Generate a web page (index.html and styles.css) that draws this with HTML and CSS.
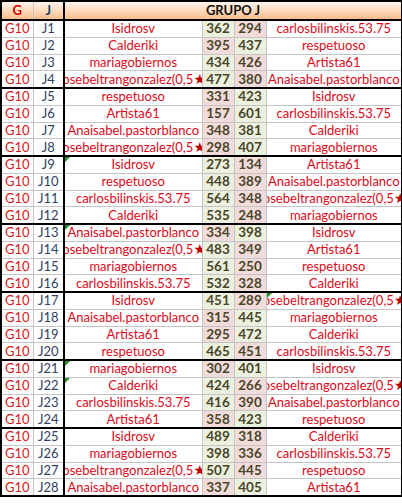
FILE: index.html
```html
<!DOCTYPE html>
<html>
<head>
<meta charset="utf-8">
<link rel="stylesheet" href="styles.css">
</head>
<body>
<table class="sheet">
<colgroup>
<col class="c-g"><col class="c-j"><col class="c-name"><col class="c-num"><col class="c-num"><col class="c-name2">
</colgroup>
<thead>
<tr class="head"><th class="h-g">G</th><th class="h-j">J</th><th colspan="4" class="h-grp">GRUPO J</th></tr>
</thead>
<tbody>
<tr><td class="g">G10</td><td class="j">J1</td><td class="name"><div class="fit">Isidrosv</div></td><td class="num win">362</td><td class="num lose">294</td><td class="name"><div class="fit">carlosbilinskis.53.75</div></td></tr>
<tr><td class="g">G10</td><td class="j">J2</td><td class="name"><div class="fit">Calderiki</div></td><td class="num lose">395</td><td class="num win">437</td><td class="name"><div class="fit">respetuoso</div></td></tr>
<tr><td class="g">G10</td><td class="j">J3</td><td class="name"><div class="fit">mariagobiernos</div></td><td class="num win">434</td><td class="num lose">426</td><td class="name"><div class="fit">Artista61</div></td></tr>
<tr class="end"><td class="g">G10</td><td class="j">J4</td><td class="name"><div class="fit"><span>Josebeltrangonzalez(0,5<span class="star">★</span>)</span></div></td><td class="num win">477</td><td class="num lose">380</td><td class="name"><div class="fit">Anaisabel.pastorblanco</div></td></tr>
<tr><td class="g">G10</td><td class="j">J5</td><td class="name"><div class="fit">respetuoso</div></td><td class="num lose">331</td><td class="num win">423</td><td class="name"><div class="fit">Isidrosv</div></td></tr>
<tr><td class="g">G10</td><td class="j">J6</td><td class="name"><div class="fit">Artista61</div></td><td class="num lose">157</td><td class="num win">601</td><td class="name"><div class="fit">carlosbilinskis.53.75</div></td></tr>
<tr><td class="g">G10</td><td class="j">J7</td><td class="name"><div class="fit">Anaisabel.pastorblanco</div></td><td class="num lose">348</td><td class="num win">381</td><td class="name"><div class="fit">Calderiki</div></td></tr>
<tr class="end"><td class="g">G10</td><td class="j">J8</td><td class="name"><div class="fit"><span>Josebeltrangonzalez(0,5<span class="star">★</span>)</span></div></td><td class="num lose">298</td><td class="num win">407</td><td class="name"><div class="fit">mariagobiernos</div></td></tr>
<tr><td class="g">G10</td><td class="j">J9</td><td class="name flag"><div class="fit">Isidrosv</div></td><td class="num win">273</td><td class="num lose">134</td><td class="name"><div class="fit">Artista61</div></td></tr>
<tr><td class="g">G10</td><td class="j">J10</td><td class="name"><div class="fit">respetuoso</div></td><td class="num win">448</td><td class="num lose">389</td><td class="name"><div class="fit">Anaisabel.pastorblanco</div></td></tr>
<tr><td class="g">G10</td><td class="j">J11</td><td class="name"><div class="fit">carlosbilinskis.53.75</div></td><td class="num win">564</td><td class="num lose">348</td><td class="name"><div class="fit"><span>Josebeltrangonzalez(0,5<span class="star">★</span>)</span></div></td></tr>
<tr class="end"><td class="g">G10</td><td class="j">J12</td><td class="name"><div class="fit">Calderiki</div></td><td class="num win">535</td><td class="num lose">248</td><td class="name"><div class="fit">mariagobiernos</div></td></tr>
<tr><td class="g">G10</td><td class="j">J13</td><td class="name flag"><div class="fit">Anaisabel.pastorblanco</div></td><td class="num lose">334</td><td class="num win">398</td><td class="name"><div class="fit">Isidrosv</div></td></tr>
<tr><td class="g">G10</td><td class="j">J14</td><td class="name"><div class="fit"><span>Josebeltrangonzalez(0,5<span class="star">★</span>)</span></div></td><td class="num win">483</td><td class="num lose">349</td><td class="name"><div class="fit">Artista61</div></td></tr>
<tr><td class="g">G10</td><td class="j">J15</td><td class="name"><div class="fit">mariagobiernos</div></td><td class="num win">561</td><td class="num lose">250</td><td class="name"><div class="fit">respetuoso</div></td></tr>
<tr class="end"><td class="g">G10</td><td class="j">J16</td><td class="name"><div class="fit">carlosbilinskis.53.75</div></td><td class="num win">532</td><td class="num lose">328</td><td class="name"><div class="fit">Calderiki</div></td></tr>
<tr><td class="g">G10</td><td class="j">J17</td><td class="name"><div class="fit">Isidrosv</div></td><td class="num win">451</td><td class="num lose">289</td><td class="name flag"><div class="fit"><span>Josebeltrangonzalez(0,5<span class="star">★</span>)</span></div></td></tr>
<tr><td class="g">G10</td><td class="j">J18</td><td class="name"><div class="fit">Anaisabel.pastorblanco</div></td><td class="num lose">315</td><td class="num win">445</td><td class="name"><div class="fit">mariagobiernos</div></td></tr>
<tr><td class="g">G10</td><td class="j">J19</td><td class="name"><div class="fit">Artista61</div></td><td class="num lose">295</td><td class="num win">472</td><td class="name"><div class="fit">Calderiki</div></td></tr>
<tr class="end"><td class="g">G10</td><td class="j">J20</td><td class="name"><div class="fit">respetuoso</div></td><td class="num win">465</td><td class="num lose">451</td><td class="name"><div class="fit">carlosbilinskis.53.75</div></td></tr>
<tr><td class="g">G10</td><td class="j">J21</td><td class="name flag"><div class="fit">mariagobiernos</div></td><td class="num lose">302</td><td class="num win">401</td><td class="name"><div class="fit">Isidrosv</div></td></tr>
<tr><td class="g">G10</td><td class="j">J22</td><td class="name flag"><div class="fit">Calderiki</div></td><td class="num win">424</td><td class="num lose">266</td><td class="name"><div class="fit"><span>Josebeltrangonzalez(0,5<span class="star">★</span>)</span></div></td></tr>
<tr><td class="g">G10</td><td class="j">J23</td><td class="name"><div class="fit">carlosbilinskis.53.75</div></td><td class="num win">416</td><td class="num lose">390</td><td class="name"><div class="fit">Anaisabel.pastorblanco</div></td></tr>
<tr class="end"><td class="g">G10</td><td class="j">J24</td><td class="name"><div class="fit">Artista61</div></td><td class="num lose">358</td><td class="num win">423</td><td class="name"><div class="fit">respetuoso</div></td></tr>
<tr><td class="g">G10</td><td class="j">J25</td><td class="name"><div class="fit">Isidrosv</div></td><td class="num win">489</td><td class="num lose">318</td><td class="name"><div class="fit">Calderiki</div></td></tr>
<tr><td class="g">G10</td><td class="j">J26</td><td class="name"><div class="fit">mariagobiernos</div></td><td class="num win">398</td><td class="num lose">336</td><td class="name"><div class="fit">carlosbilinskis.53.75</div></td></tr>
<tr><td class="g">G10</td><td class="j">J27</td><td class="name"><div class="fit"><span>Josebeltrangonzalez(0,5<span class="star">★</span>)</span></div></td><td class="num win">507</td><td class="num lose">445</td><td class="name"><div class="fit">respetuoso</div></td></tr>
<tr class="end"><td class="g">G10</td><td class="j">J28</td><td class="name"><div class="fit">Anaisabel.pastorblanco</div></td><td class="num lose">337</td><td class="num win">405</td><td class="name"><div class="fit">Artista61</div></td></tr>
</tbody>
</table>
</body>
</html>
```

FILE: styles.css
```css
html, body {
  margin: 0;
  padding: 0;
  background: #ffffff;
}

.sheet {
  border-collapse: collapse;
  table-layout: fixed;
  width: 401px;
  margin: 0;
  border: 2px solid #000;
  font-family: Lato, "Liberation Sans", sans-serif;
  font-size: 13px;
}

.c-g { width: 32px; }
.c-j { width: 31px; }
.c-name { width: 138px; }
.c-num { width: 32px; }
.c-name2 { width: 136px; }

.sheet th,
.sheet td {
  padding: 0;
  border: 1px solid #c4c4c4;
  height: 15.75px;
  line-height: 15px;
  text-align: center;
  white-space: nowrap;
  overflow: hidden;
}

.head th {
  height: 17px;
  background: linear-gradient(to bottom, #fff4ec 0%, #fcd8b8 55%, #f8bd8a 100%);
  font-weight: 700;
  border-bottom: 2px solid #000;
  border-top: 2px solid #000;
}

.h-g { color: #d00000; }
.h-j { color: #1f3f6e; border-right: 2px solid #000 !important; }
.h-grp { color: #111; border-right: 2px solid #000; }

.g { color: #d81818; }
.j { color: #2f4060; border-right: 2px solid #000 !important; }

.name {
  color: #dc0a1a;
  position: relative;
}
.name:last-child { border-right: 2px solid #000; }

.fit {
  display: flex;
  justify-content: center;
  overflow: hidden;
  white-space: nowrap;
}

.star {
  color: #c00000;
  font-family: "DejaVu Sans", sans-serif;
  font-size: 14px;
}

.num {
  font-weight: 700;
  font-size: 13.5px;
  color: #494529;
}
.win { background: #ebf1de; }
.lose { background: #f2dcdb; }

.end td { border-bottom: 2px solid #000; }

.flag::before {
  content: "";
  position: absolute;
  left: 0;
  top: 0;
  border-top: 5px solid #1f8f1f;
  border-right: 5px solid transparent;
}
```
